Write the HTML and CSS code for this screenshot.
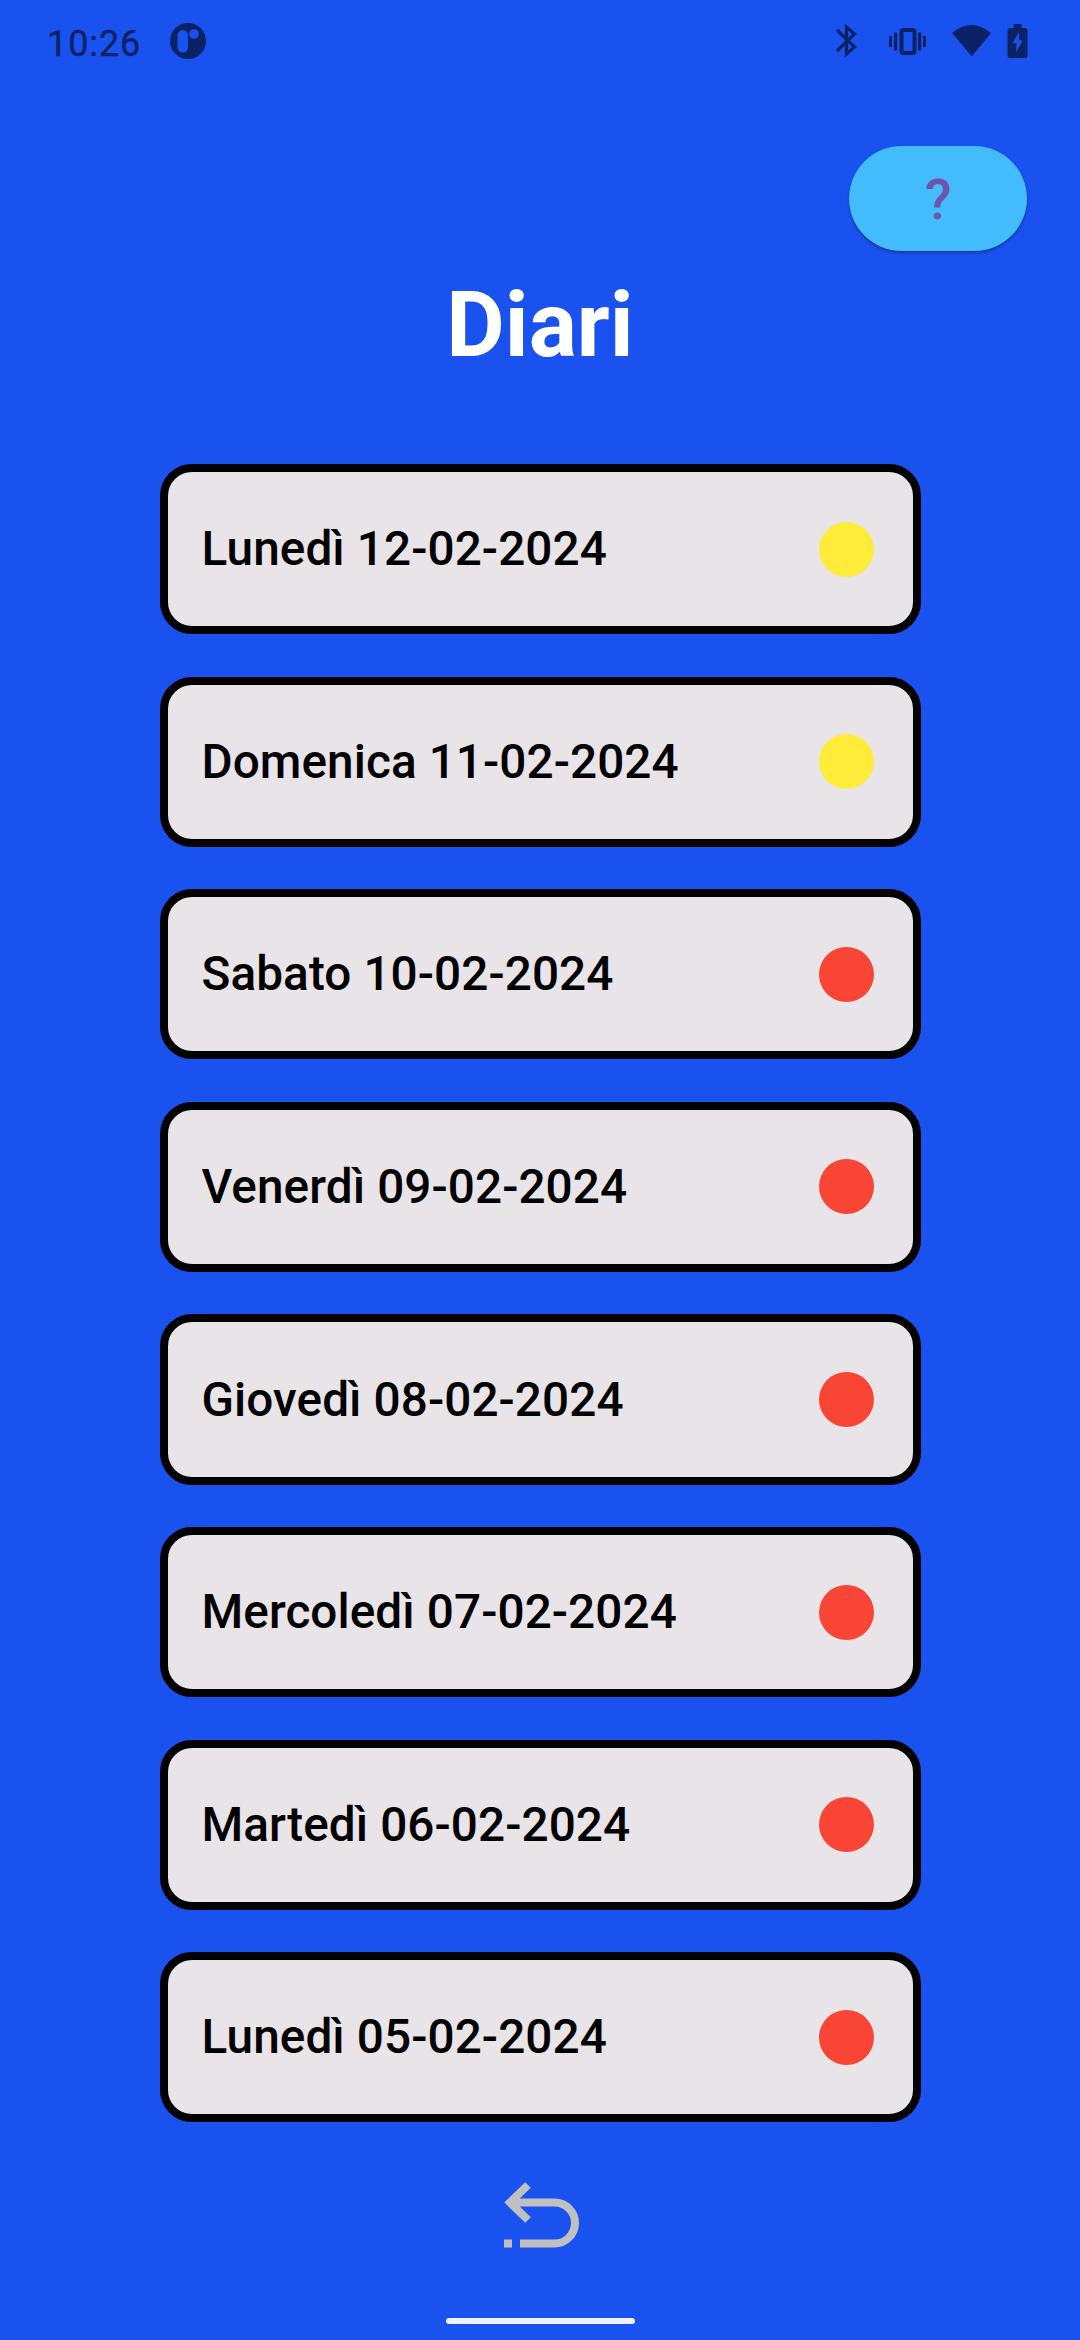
FILE: index.html
```html
<!DOCTYPE html>
<html lang="it">
<head>
<meta charset="utf-8">
<title>Diari</title>
<link rel="stylesheet" href="styles.css">
</head>
<body>
<div class="screen">
  <header class="status">
    <span class="time">10:26</span>
    <svg class="app-icon" width="38" height="38" viewBox="0 0 38 38">
      <circle cx="19" cy="19" r="18" fill="#0b2366"/>
      <rect x="8.5" y="8" width="10.5" height="22.5" rx="5.2" fill="#1a52ef"/>
      <circle cx="25" cy="12" r="4.8" fill="#1a52ef"/>
    </svg>
    <svg class="indicators" width="200" height="40" viewBox="0 0 200 40" fill="#0b2366">
      <path d="M5 10 22.500 27 14.500 34V7L22.500 14 5 31" fill="none" stroke="#0b2366" stroke-width="3.2"/>
      <rect x="69.500" y="10" width="13" height="23" rx="2" fill="none" stroke="#0b2366" stroke-width="4"/>
      <path d="M57 16h3v11h-3zM62 12.500h3.200v18H62zM86 12.500h3.200v18H86zM91 16h3v11h-3z"/>
      <path d="M120 13Q139.500-3 159 13L139.800 36.500z"/>
      <path d="M181.500 4h8v4h3.500q2.500 0 2.500 2.500v25q0 2.500-2.500 2.500h-15q-2.500 0-2.500-2.500v-25Q175.500 8 178 8h3.500z"/>
      <path d="M187 12v8.300h3.700l-6.300 12v-9h-3.700z" fill="#1a52ef"/>
    </svg>
  </header>
  <button class="help">?</button>
  <h1 class="title">Diari</h1>
  <main class="list">
    <div class="card"><span>Lunedì 12-02-2024</span><i class="dot yellow"></i></div>
    <div class="card"><span>Domenica 11-02-2024</span><i class="dot yellow"></i></div>
    <div class="card"><span>Sabato 10-02-2024</span><i class="dot"></i></div>
    <div class="card"><span>Venerdì 09-02-2024</span><i class="dot"></i></div>
    <div class="card"><span>Giovedì 08-02-2024</span><i class="dot"></i></div>
    <div class="card"><span>Mercoledì 07-02-2024</span><i class="dot"></i></div>
    <div class="card"><span>Martedì 06-02-2024</span><i class="dot"></i></div>
    <div class="card"><span>Lunedì 05-02-2024</span><i class="dot"></i></div>
  </main>
  <svg class="back" width="76" height="66" viewBox="0 0 76 66">
    <path d="M24 3 6 20.500 24 38M6 20.500H50.500a20.500 20.500 0 0 1 0 41H16" fill="none" stroke="#c0c0c0" stroke-width="8"/>
    <path d="M0 57.500h8v8H0z" fill="#c0c0c0"/>
  </svg>
  <div class="gesture"></div>
</div>
</body>
</html>
```
FILE: styles.css
```css
* { box-sizing: border-box; }
body { margin: 0; background: #1a52ef; font-family: Roboto, sans-serif; }
.screen { width: 1080px; height: 2340px; display: flex; flex-direction: column; align-items: center; overflow: hidden; }
.status { width: 100%; height: 146px; padding: 20px 48px 0 47px; display: flex; align-items: flex-start; color: #0b2366; }
.time { margin-top: 3px; font-size: 36px; line-height: 42px; font-weight: 400; letter-spacing: 0.9px; -webkit-text-stroke: 0.4px #0b2366; }
.app-icon { margin: 2px 0 0 28px; }
.indicators { margin-left: auto; }
.help { align-self: flex-end; margin: 0 53px 0 0; width: 178px; height: 105px; padding: 4px 0 0; border: 0; border-radius: 53px; background: #43bcfd; color: #6f53aa; font: 500 55px/101px Roboto, sans-serif; box-shadow: 0 2px 3px rgba(0, 0, 0, 0.3); }
.title { margin: 21px 0 0; height: 192px; font-size: 90px; line-height: 108px; font-weight: 700; color: #fff; }
.list { width: 761px; display: flex; flex-direction: column; gap: 42.3px; }
.card { height: 170.3px; padding: 0 39px 0 34px; display: flex; align-items: center; justify-content: space-between; border: 8px solid #000; border-radius: 32px; background: #e8e4e7; color: #000; font-size: 47.7px; line-height: 56px; font-weight: 500; letter-spacing: 0.08px; }
.dot { width: 55px; height: 55px; border-radius: 50%; background: #f84535; }
.yellow { background: #ffeb3a; }
.back { margin: 60px 0 0 4px; }
.gesture { width: 189px; height: 6px; margin-top: 70px; border-radius: 3px; background: #eef1fe; }
```
